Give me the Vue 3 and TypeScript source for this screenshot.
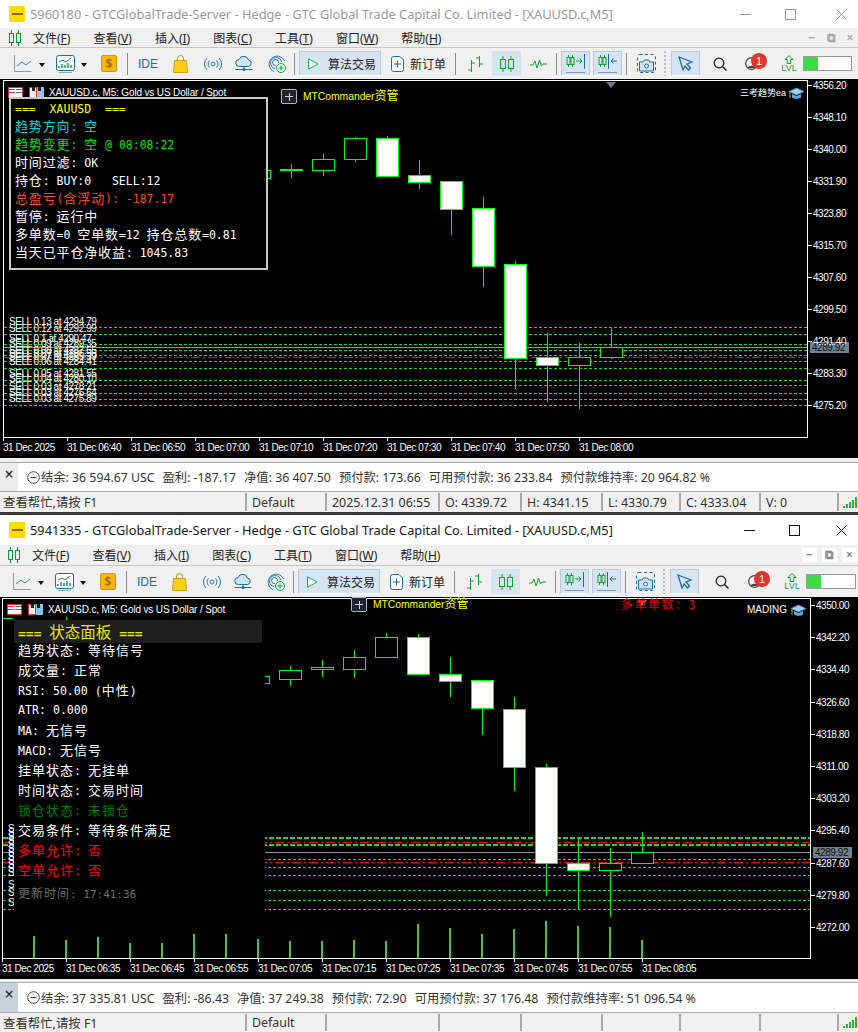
<template>
  <div class="page">
    <section v-for="w in windows" :key="w.id" class="win" :class="w.cls">
      <!-- title bar -->
      <header class="title">
        <span class="logo"><i></i></span>
        <span class="title-text">{{ w.id }} - GTCGlobalTrade-Server - Hedge - GTC Global Trade Capital Co. Limited - [XAUUSD.c,M5]</span>
        <span class="caption">
          <svg class="cap-min" width="11" height="11" viewBox="0 0 11 11"><path d="M0 5.5h11" /></svg>
          <svg class="cap-max" width="11" height="11" viewBox="0 0 11 11"><rect x=".5" y=".5" width="10" height="10" /></svg>
          <svg class="cap-close" width="11" height="11" viewBox="0 0 11 11"><path d="M.5.5l10 10M10.5.5l-10 10" /></svg>
        </span>
      </header>

      <!-- menu -->
      <nav class="menu">
        <svg class="menu-logo" width="12" height="16" viewBox="0 0 12 16">
          <path d="M2.5 0v16M9.5 0v16" stroke="#0a9a35" fill="none" />
          <rect x=".5" y="3.5" width="4" height="9" fill="#f0f0f0" stroke="#0a9a35" />
          <rect x="7.5" y="3.5" width="4" height="9" fill="#f0f0f0" stroke="#0a9a35" />
        </svg>
        <span v-for="m in menus" :key="m.k" class="menu-item">{{ m.t }}(<u>{{ m.k }}</u>)</span>
        <span class="mdi">
          <b>&#8722;</b><b>&#10697;</b><b>&#215;</b>
        </span>
      </nav>

      <!-- toolbar -->
      <div class="toolbar">
        <svg class="ti i-line" width="18" height="17" viewBox="0 0 18 17">
          <path d="M.5 0v16.500h17" stroke="#9a9a9a" fill="none" />
          <path d="M3 11l5-4 4 3 5-4" stroke="#3f7fb5" fill="none" />
        </svg>
        <span class="caret c1"></span>
        <svg class="ti i-chart" width="19" height="18" viewBox="0 0 19 18">
          <rect x=".5" y=".5" width="18" height="15" rx="2" fill="#fff" stroke="#1c6ca8" />
          <path d="M3 7l4-2 3 2 5-4" stroke="#1c6ca8" fill="none" />
          <path d="M3 13v-2M6 13v-4M9 13v-3M12 13v-5M15 13v-3" stroke="#1aa34a" stroke-width="1.500" />
          <path d="M3 17.500h13" stroke="#8aa" />
        </svg>
        <span class="caret c2"></span>
        <span class="ti i-dollar">$</span>
        <span class="sep s1"></span>
        <span class="ti i-ide">IDE</span>
        <svg class="ti i-bag" width="15" height="18" viewBox="0 0 15 18">
          <path d="M4.500 6V3.500a3 3 0 0 1 6 0V6" fill="none" stroke="#c98a10" />
          <path d="M1.500 5.500h12l1 12H.5z" fill="#ffcf10" stroke="#d8a010" />
        </svg>
        <svg class="ti i-signal" width="18" height="14" viewBox="0 0 18 14">
          <circle cx="9" cy="7" r="2" fill="none" stroke="#2a78b8" />
          <path d="M5.500 3.500a5 5 0 0 0 0 7M12.500 3.500a5 5 0 0 1 0 7M2.800 1a9 9 0 0 0 0 12M15.200 1a9 9 0 0 1 0 12" fill="none" stroke="#2a78b8" />
        </svg>
        <svg class="ti i-cloud" width="18" height="16" viewBox="0 0 18 16">
          <path d="M4.500 10.500a3.500 3.500 0 0 1-.5-7 5 5 0 0 1 9.500.5 3.300 3.300 0 0 1 0 6.500z" fill="#cfe4f5" stroke="#1c6ca8" />
          <path d="M9 10.500v3M.5 13.500h17" stroke="#1c6ca8" fill="none" />
          <circle cx="9" cy="13.500" r="1.500" fill="#1c6ca8" />
        </svg>
        <svg class="ti i-radar" width="18" height="18" viewBox="0 0 18 18">
          <path d="M6 16.500A8 8 0 1 1 16.500 6M7 13.500A5.500 5.500 0 1 1 13.500 7M8 10.500A3 3 0 1 1 10.500 8" fill="none" stroke="#2a78b8" />
          <circle cx="13" cy="13" r="4.500" fill="#e8f8ea" stroke="#1aa34a" />
          <path d="M13 10.500v5M10.500 13h5" stroke="#1aa34a" />
        </svg>
        <span class="sep s2"></span>
        <span class="tbtn algo">
          <svg width="11" height="12" viewBox="0 0 11 12"><path d="M.5.800v10.400L10 6z" fill="#f2fbf2" stroke="#1db34a" /></svg>
          <em>算法交易</em>
        </span>
        <span class="order">
          <svg width="13" height="16" viewBox="0 0 13 16">
            <path d="M.5 2.500a2 2 0 0 1 2-2H9l3.500 3.500V13.500a2 2 0 0 1-2 2h-8a2 2 0 0 1-2-2z" fill="#fff" stroke="#1c6ca8" />
            <path d="M6.500 4.500v7M3 8h7" stroke="#1c6ca8" />
          </svg>
          <em>新订单</em>
        </span>
        <span class="sep s3"></span>
        <svg class="ti i-bars" width="17" height="16" viewBox="0 0 17 16">
          <path d="M4.500 4v12M1 14h3.500M4.500 7H8M12.500 0v11M9 2h3.500M12.500 8H16" stroke="#12a32e" fill="none" />
        </svg>
        <span class="tbtn square candles">
          <svg width="14" height="16" viewBox="0 0 14 16">
            <path d="M3 0v16M11 0v16" stroke="#12a32e" />
            <rect x=".5" y="3.500" width="5" height="9" fill="#d6e4f2" stroke="#12a32e" />
            <rect x="8.500" y="3.500" width="5" height="9" fill="#d6e4f2" stroke="#12a32e" />
          </svg>
        </span>
        <svg class="ti i-zig" width="17" height="10" viewBox="0 0 17 10">
          <path d="M0 6h3l2-4 2 7 2.500-8 2 6 1.500-2H17" stroke="#12a32e" fill="none" />
        </svg>
        <span class="sep s4"></span>
        <span class="tbtn square shift1">
          <svg width="20" height="20" viewBox="0 0 20 20">
            <path d="M2.500 1v12M6.500 1v12" stroke="#12a32e" />
            <rect x="1" y="3.500" width="3" height="7" fill="#d6e4f2" stroke="#12a32e" />
            <rect x="5" y="3.500" width="3" height="7" fill="#d6e4f2" stroke="#12a32e" />
            <path d="M10 7h6M13.500 4.500L16 7l-2.500 2.500" stroke="#12a32e" fill="none" />
            <path d="M18.500 0v15" stroke="#1c6ca8" />
            <path d="M0 18.500h19" stroke="#8a9aaa" />
          </svg>
        </span>
        <span class="tbtn square shift2">
          <svg width="20" height="20" viewBox="0 0 20 20">
            <path d="M2.500 1v12M6.500 1v12" stroke="#12a32e" />
            <rect x="1" y="3.500" width="3" height="7" fill="#d6e4f2" stroke="#12a32e" />
            <rect x="5" y="3.500" width="3" height="7" fill="#d6e4f2" stroke="#12a32e" />
            <path d="M10.500 0v15" stroke="#1c6ca8" />
            <path d="M13 7h6M15.500 4.500L13 7l2.500 2.500" stroke="#1c6ca8" fill="none" />
            <path d="M0 18.500h19" stroke="#8a9aaa" />
          </svg>
        </span>
        <span class="sep s5"></span>
        <svg class="ti i-shot" width="19" height="19" viewBox="0 0 19 19">
          <rect x=".5" y=".5" width="18" height="18" rx="2" fill="none" stroke="#1c6ca8" stroke-dasharray="3 2.500" />
          <path d="M6 8l1.500-2h4L13 8h3.500v9H2.500V8z" fill="#cfe4f5" stroke="#1c6ca8" />
          <circle cx="9.500" cy="12" r="2" fill="#fff" stroke="#1c6ca8" />
        </svg>
        <span class="grip"></span>
        <span class="tbtn square cursor">
          <svg width="15" height="15" viewBox="0 0 15 15"><path d="M1 1l13 5-5 2 3.500 4-2 2-3.500-4L5 14z" fill="#d6e4f2" stroke="#1c6ca8" stroke-width="1.300" /></svg>
        </span>
        <svg class="ti i-search" width="14" height="14" viewBox="0 0 14 14"><circle cx="6" cy="6" r="4.800" fill="none" stroke="#222" stroke-width="1.300" /><path d="M9.500 9.500L13.500 13.500" stroke="#222" stroke-width="1.500" /></svg>
        <span class="ti i-user">
          <svg width="13" height="13" viewBox="0 0 13 13"><circle cx="6.500" cy="6.500" r="5.800" fill="none" stroke="#444" stroke-width="1.200" /><path d="M2.500 11c1-3 7-3 8 0" fill="#444" /></svg>
          <b class="badge">1</b>
        </span>
        <span class="ti i-lvl">
          <svg width="10" height="9" viewBox="0 0 10 9"><path d="M5 .5L9 4.500H6.800V8.500H3.200V4.500H1z" fill="#e2f6e4" stroke="#18a038" /></svg>
          <b>LVL</b>
        </span>
        <span class="ti meter"><i></i></span>
      </div>

      <!-- chart -->
      <main class="chart">
        <svg class="plot" width="858" :height="w.h" :viewBox="`0 ${w.top} 858 ${w.h}`">
          <g shape-rendering="crispEdges">
            <rect x="0" :y="w.top" width="858" :height="w.h" fill="#000" />
            <path :d="`M${w.left + .5} ${w.top + 1}V${w.bottom + .5}H${w.right + .5}V${w.top + 1.500}H${w.left}`" fill="none" stroke="#fff" />
            <!-- order levels -->
            <line v-for="l in w.levels" :key="l.y" :x1="w.left + 1" :x2="w.right" :y1="l.y + .5" :y2="l.y + .5" :stroke="l.c" :stroke-width="l.sw ?? 1" :stroke-dasharray="l.d" />
            <!-- candles -->
            <g v-for="c in w.candles" :key="c.x">
              <line :x1="c.x + .5" :x2="c.x + .5" :y1="c.hi" :y2="c.lo" stroke="#00ff00" />
              <rect :x="c.x - 10.5" :y="c.top + .5" width="22" :height="c.bot - c.top" :fill="c.up ? '#000' : '#fff'" stroke="#00ff00" />
            </g>
            <!-- volumes -->
            <rect v-for="v in w.vols" :key="v.x" :x="v.x - 1" :y="v.y" width="2" :height="w.bottom - v.y" fill="#32cd32" />
            <!-- ticks -->
            <path v-for="t in w.times" :key="t.x" :d="`M${t.x + .5} ${w.bottom}v4`" stroke="#fff" />
            <path v-for="p in w.prices" :key="p.t" :d="`M${w.right} ${p.y + .5}h5`" stroke="#fff" />
            <rect :x="w.right + 3" :y="w.cur - 5" width="39" height="11" fill="#708090" />
          </g>
          <path :d="`M${w.tri - 5} ${w.top + 3}h10l-5 6z`" fill="#6f7b8a" />

          <g class="lbl">
            <text v-for="s in w.sells" :key="s.y" :x="w.sellX" :y="s.y + 3" fill="#fff">{{ s.t }}</text>
            <text v-for="t in w.times" :key="t.t" :x="t.x" :y="w.bottom + 14" fill="#fff">{{ t.t }}</text>
            <text v-for="p in w.prices" :key="p.t" :x="w.right + 6" :y="p.y + 4" fill="#fff">{{ p.t }}</text>
            <text :x="w.right + 5" :y="w.cur + 4" fill="#111">4289.92</text>
            <text class="sym" :x="w.symX" :y="w.symY" fill="#fff">XAUUSD.c, M5:  Gold vs US Dollar / Spot</text>
          </g>
          <!-- chart state icons -->
          <g shape-rendering="crispEdges">
            <rect :x="w.symX - 40.5" :y="w.symY - 8.5" width="14" height="10" fill="#fff" stroke="#d33" />
            <path :d="`M${w.symX - 40} ${w.symY - 6.5}h6M${w.symX - 40} ${w.symY - 3.5}h6`" stroke="#d33" />
            <path :d="`M${w.symX - 33} ${w.symY - 6.5}h6M${w.symX - 33} ${w.symY - 3.5}h6`" stroke="#2a78d8" />
            <rect :x="w.symX - 19.5" :y="w.symY - 8.500" width="7" height="10" fill="#f6ecec" stroke="#d33" />
            <rect :x="w.symX - 12" :y="w.symY - 9" width="7" height="11" fill="#8fc4ea" />
            <rect :x="w.symX - 17" :y="w.symY - 9" width="3" height="4" fill="#222" />
            <rect :x="w.symX - 11" :y="w.symY - 9" width="3" height="4" fill="#222" />
          </g>
          <!-- trade button -->
          <g class="plus" shape-rendering="crispEdges">
            <rect :x="w.plusX + .5" :y="w.plusY + .5" width="15" height="14" rx="2" fill="#1d2430" stroke="#aeb4bc" />
            <path :d="`M${w.plusX + 4} ${w.plusY + 7.500}h8M${w.plusX + 8} ${w.plusY + 4}v8`" stroke="#d0d4d8" />
          </g>
          <text class="cmd" :x="w.plusX + 22" :y="w.plusY + 11" fill="#ffff00">MTCommander<tspan class="cmd-cjk">资管</tspan></text>
          <text v-if="w.count" class="count" x="621" y="609" fill="#e00000">多单单数：3</text>
          <text class="brand" :x="w.brandX" :y="w.brandY" fill="#fff">{{ w.brand }}</text>
          <!-- cap -->
          <g :transform="`translate(${w.capX} ${w.brandY - 9})`">
            <path d="M0 4.500L7.500 1 15 4.500 7.500 8z" fill="#9fd0f0" stroke="#3a8cc8" stroke-width=".8" />
            <path d="M3 7v3.500c2 1.800 7 1.800 9 0V7L7.500 9z" fill="#5fa8dc" />
            <path d="M1 5v6" stroke="#d0a040" />
          </g>
          <path v-if="w.cls === 'w2'" d="M3 618.500h10M66.500 617v2.500" stroke="#00ff00" shape-rendering="crispEdges" />
        </svg>

        <!-- info panel floating over the chart -->
        <div class="panel" :class="w.panelCls">
          <div v-for="(row, i) in w.panel" :key="i" class="row" :class="row.c">
            <span v-for="(r, j) in runs(row.t)" :key="j" :class="r.cjk ? 'cjk' : 'lat'">{{ r.t }}</span>
          </div>
        </div>
      </main>

      <!-- account line -->
      <div class="gutter"></div>
      <div class="terminal">
        <span class="close-x">&#215;</span>
        <svg class="minus" width="13" height="13" viewBox="0 0 13 13"><circle cx="6.500" cy="6.500" r="5.800" fill="none" stroke="#444" /><path d="M3.500 6.500h6" stroke="#444" /></svg>
        <span v-for="a in w.account" :key="a" class="acct">{{ a }}</span>
      </div>

      <!-- status bar -->
      <footer class="status">
        <span class="help">查看帮忙,请按 F1</span>
        <span>Default</span>
        <span>{{ w.stat[0] }}</span>
        <span>{{ w.stat[1] }}</span>
        <span>{{ w.stat[2] }}</span>
        <span>{{ w.stat[3] }}</span>
        <span>{{ w.stat[4] }}</span>
        <span>{{ w.stat[5] }}</span>
        <span class="conn">
          <svg width="15" height="11" viewBox="0 0 15 11" shape-rendering="crispEdges">
            <path d="M0 9h2v2H0zM3 7h2v4H3zM6 5h2v6H6zM9 3h2v8H9zM12 0h2v11h-2z" fill="#2cb52c" />
          </svg>
        </span>
      </footer>
    </section>
  </div>
</template>

<script setup lang="ts">
interface Candle { x: number; hi: number; lo: number; top: number; bot: number; up: boolean }
interface Level { y: number; c: string; d?: string; sw?: number }

const menus = [
  { t: '文件', k: 'F' },
  { t: '查看', k: 'V' },
  { t: '插入', k: 'I' },
  { t: '图表', k: 'C' },
  { t: '工具', k: 'T' },
  { t: '窗口', k: 'W' },
  { t: '帮助', k: 'H' },
]

// 把文字拆成中文段和西文段, 两段字号不同
const runs = (s: string) =>
  (s.match(/[\u3000-\u9fff\uff00-\uffef]+|[^\u3000-\u9fff\uff00-\uffef]+/g) ?? []).map((t) => ({
    t,
    cjk: /[\u3000-\u9fff\uff00-\uffef]/.test(t),
  }))

const candle = (x: number, hi: number, lo: number, top: number, bot: number, up: boolean): Candle => ({ x, hi, lo, top, bot, up })

const G = '#32cd32'
const dash = (y: number, sw = 1): Level => ({ y, c: G, d: sw > 1 ? '5 2' : '3 2', sw })
const red = (y: number, c = '#ff0000'): Level => ({ y, c, d: '9 3 2 3' })

const times = (start: number, labels: string[]) => labels.map((t, i) => ({ x: start + i * 64, t: '31 Dec ' + t }))

const win1 = {
  id: '5960180',
  cls: 'w1',
  top: 79,
  h: 379,
  left: 3,
  right: 807,
  bottom: 437,
  cur: 347,
  tri: 611,
  symX: 49,
  symY: 96,
  plusX: 281,
  plusY: 89,
  brand: '三考趋势ea',
  brandX: 740,
  brandY: 96,
  capX: 789,
  sellX: 9,
  count: false,
  panelCls: 'p1',
  candles: [
    candle(259, 170, 178, 170, 178, true),
    candle(291, 164, 178, 169, 170, true),
    candle(323, 154, 176, 159, 170, true),
    candle(355, 137, 162, 138, 159, true),
    candle(387, 136, 177, 138, 176, false),
    candle(419, 160, 189, 175, 182, false),
    candle(451, 181, 235, 181, 209, false),
    candle(483, 197, 287, 208, 266, false),
    candle(515, 261, 389, 264, 358, false),
    candle(547, 333, 402, 357, 365, false),
    candle(579, 343, 409, 357, 365, true),
    candle(611, 327, 359, 347, 357, true),
  ],
  vols: [] as { x: number; y: number }[],
  levels: [
    dash(327), dash(334), dash(344), dash(350), dash(355), dash(361), dash(368), dash(380), dash(385), dash(393), dash(399), dash(405),
    { y: 347, c: '#8a97a6' },
    red(357, '#d02020'),
  ] as Level[],
  sells: [
    { y: 322, t: 'SELL 0.13 at 4294.79' },
    { y: 329, t: 'SELL 0.12 at 4292.99' },
    { y: 339, t: 'SELL 0.1 at 4290.47' },
    { y: 344, t: 'SELL 0.09 at 4289.35' },
    { y: 351, t: 'SELL 0.08 at 4287.55' },
    { y: 354, t: 'SELL 0.07 at 4286.55' },
    { y: 357, t: 'SELL 0.07 at 4285.39' },
    { y: 362, t: 'SELL 0.06 at 4284.41' },
    { y: 374, t: 'SELL 0.05 at 4281.55' },
    { y: 379, t: 'SELL 0.04 at 4280.10' },
    { y: 387, t: 'SELL 0.03 at 4278.21' },
    { y: 393, t: 'SELL 0.03 at 4276.64' },
    { y: 399, t: 'SELL 0.03 at 4275.89' },
  ],
  times: [
    { x: 3, t: '31 Dec 2025' },
    ...times(67, ['06:40', '06:50', '07:00', '07:10', '07:20', '07:30', '07:40', '07:50', '08:00']),
  ],
  prices: ['4356.20', '4348.10', '4340.00', '4331.90', '4323.80', '4315.70', '4307.60', '4299.50', '4291.40', '4283.30', '4275.20'].map((t, i) => ({
    t,
    y: Math.round(85 + i * 32.02),
  })),
  panel: [
    { t: '===  XAUUSD  ===', c: 'yellow' },
    { t: '趋势方向: 空', c: 'cyan' },
    { t: '趋势变更: 空 @ 08:08:22', c: 'green' },
    { t: '时间过滤: OK' },
    { t: '持仓: BUY:0   SELL:12' },
    { t: '总盈亏(含浮动): -187.17', c: 'loss' },
    { t: '暂停: 运行中' },
    { t: '多单数=0 空单数=12 持仓总数=0.81' },
    { t: '当天已平仓净收益: 1045.83' },
  ],
  account: ['结余: 36 594.67 USC', '盈利: -187.17', '净值: 36 407.50', '预付款: 173.66', '可用预付款: 36 233.84', '预付款维持率: 20 964.82 %'],
  stat: ['2025.12.31 06:55', 'O: 4339.72', 'H: 4341.15', 'L: 4330.79', 'C: 4333.04', 'V: 0'],
}

const volTops = [936, 940, 937, 943, 943, 934, 934, 939, 941, 941, 940, 941, 924, 928, 934, 929, 921, 926, 927, 940]

const win2 = {
  id: '5941335',
  cls: 'w2',
  top: 597,
  h: 382,
  left: 2,
  right: 810,
  bottom: 958,
  cur: 852,
  tri: 642,
  symX: 48,
  symY: 613,
  plusX: 351,
  plusY: 597,
  brand: 'MADING',
  brandX: 747,
  brandY: 613,
  capX: 791,
  sellX: 8,
  count: true,
  panelCls: 'p2',
  candles: [
    candle(258, 676, 683, 676, 683, true),
    candle(290, 666, 686, 670, 679, true),
    candle(322, 660, 677, 667, 669, true),
    candle(354, 650, 678, 657, 669, true),
    candle(386, 633, 657, 637, 657, true),
    candle(418, 634, 674, 637, 674, false),
    candle(450, 657, 697, 674, 681, false),
    candle(482, 680, 735, 680, 708, false),
    candle(514, 697, 791, 709, 767, false),
    candle(546, 764, 896, 767, 863, false),
    candle(578, 837, 909, 863, 870, false),
    candle(610, 848, 917, 863, 870, true),
    candle(642, 832, 864, 852, 863, true),
  ],
  vols: volTops.map((y, i) => ({ x: 34 + i * 32, y })),
  levels: [
    dash(837, 2), dash(844, 2), dash(859), dash(867), dash(875), dash(890), dash(900), dash(909),
    red(842), red(862),
    { y: 852, c: '#8a97a6' },
  ] as Level[],
  sells: [829, 833, 837, 841, 845, 849, 853, 857, 861, 865, 869, 873, 885, 893, 903].map((y) => ({ y, t: 'SELL 0.03 at 4275.89' })),
  times: [
    { x: 2, t: '31 Dec 2025' },
    ...times(66, ['06:35', '06:45', '06:55', '07:05', '07:15', '07:25', '07:35', '07:45', '07:55', '08:05']),
  ],
  prices: ['4350.00', '4342.20', '4334.40', '4326.60', '4318.80', '4311.00', '4303.20', '4295.40', '4287.60', '4279.80', '4272.00'].map((t, i) => ({
    t,
    y: Math.round(605 + i * 32.2),
  })),
  panel: [
    { t: '=== 状态面板 ===', c: 'head' },
    { t: '趋势状态: 等待信号' },
    { t: '成交量: 正常' },
    { t: 'RSI: 50.00 (中性)' },
    { t: 'ATR: 0.000' },
    { t: 'MA: 无信号' },
    { t: 'MACD: 无信号' },
    { t: '挂单状态: 无挂单' },
    { t: '时间状态: 交易时间' },
    { t: '锁仓状态: 未锁仓', c: 'dim' },
    { t: '交易条件: 等待条件满足' },
    { t: '多单允许: 否', c: 'bad' },
    { t: '空单允许: 否', c: 'bad' },
    { t: '更新时间: 17:41:36', c: 'time' },
  ],
  account: ['结余: 37 335.81 USC', '盈利: -86.43', '净值: 37 249.38', '预付款: 72.90', '可用预付款: 37 176.48', '预付款维持率: 51 096.54 %'],
  stat: ['', '', '', '', '', ''],
}

const windows = [win1, win2]
</script>

<style>
html,
body {
  margin: 0;
  background: #3a3a3a;
  overflow: hidden;
}
</style>

<style scoped>
.page {
  width: 858px;
  height: 1032px;
  overflow: hidden;
  font-family: "Noto Sans", "Noto Sans CJK SC", sans-serif;
  color: #222;
}

.win {
  display: flex;
  flex-direction: column;
  background: #f0f0f0;
}

.w1 {
  height: 512px;
  margin-bottom: 3px;
}

.w2 {
  height: 517px;
}

/* title bar */
.title {
  display: flex;
  align-items: center;
  background: #fff;
  height: 28px;
  flex: none;
}

.w2 .title {
  height: 30px;
}

.logo {
  width: 16px;
  height: 16px;
  margin-left: 9px;
  background: #ffdc00;
  display: flex;
  align-items: center;
  justify-content: center;
}

.logo i {
  width: 11px;
  height: 2px;
  background: #7a6a20;
}

.title-text {
  margin-left: 5px;
  font-size: 12.8px;
  color: #1a1a1a;
  white-space: nowrap;
}

.w1 .title-text {
  color: #9a9a9a;
}

.caption {
  margin-left: auto;
  display: flex;
  gap: 34px;
  padding-right: 11px;
}

.caption svg {
  fill: none;
  stroke: #9a9a9a;
}

.w2 .caption svg {
  stroke: #111;
}

.cap-close {
  margin-left: 6px;
}

.w2 .cap-close {
  margin-left: 2px;
}

/* menu */
.menu {
  display: flex;
  align-items: center;
  gap: 23px;
  height: 20px;
  flex: none;
  padding-left: 9px;
  font-size: 12px;
  border-bottom: 1px solid #c6c6c6;
  box-sizing: border-box;
  position: relative;
}

.w2 .menu {
  height: 21px;
  padding-left: 8px;
}

.menu-logo {
  margin-right: -11px;
}

.menu-item {
  white-space: nowrap;
  font-size: 12px;
}

.mdi {
  margin-left: auto;
  display: flex;
  gap: 5px;
  padding-right: 1px;
}

.mdi b {
  width: 14px;
  font-size: 12px;
  line-height: 14px;
  color: #aaa;
  text-align: center;
}

.w2 .mdi b {
  background: #fff;
  color: #8a8a8a;
  width: 15px;
}

/* toolbar */
.toolbar {
  display: flex;
  align-items: center;
  height: 31px;
  flex: none;
}

.ti {
  flex: none;
}

.caret {
  flex: none;
  border-left: 3.5px solid transparent;
  border-right: 3.5px solid transparent;
  border-top: 4px solid #111;
  margin-top: 2px;
}

.sep {
  flex: none;
  width: 1px;
  height: 22px;
  background: #8f8f8f;
}

.i-line {
  margin-left: 14px;
}

.w2 .i-line {
  margin-left: 13px;
}

.c1 {
  margin-left: 7px;
}

.i-chart {
  margin-left: 11px;
}

.c2 {
  margin-left: 6px;
}

.i-dollar {
  margin-left: 14px;
  width: 14px;
  height: 15px;
  line-height: 15px;
  text-align: center;
  background: #f6b80c;
  border: 1px solid #d89410;
  border-radius: 2px;
  font-size: 12px;
  font-weight: 700;
  color: #a86f05;
}

.s1 {
  margin-left: 10px;
}

.i-ide {
  margin-left: 10px;
  font-family: "Liberation Sans", sans-serif;
  font-size: 12px;
  color: #1a6cae;
}

.i-bag {
  margin-left: 15px;
}

.i-signal {
  margin-left: 16px;
}

.i-cloud {
  margin-left: 13px;
}

.i-radar {
  margin-left: 15px;
}

.s2 {
  margin-left: 8px;
}

.tbtn {
  flex: none;
  display: flex;
  align-items: center;
  height: 25px;
  background: #d6e4f2;
  border: 1px solid #bccbdb;
  border-bottom-color: #fff;
  box-sizing: border-box;
}

.tbtn em,
.order em {
  font-style: normal;
  font-size: 12px;
  white-space: nowrap;
}

.algo {
  margin-left: 4px;
  width: 82px;
  padding-left: 8px;
  gap: 9px;
}

.order {
  flex: none;
  display: flex;
  align-items: center;
  margin-left: 10px;
  gap: 6px;
}

.s3 {
  margin-left: 9px;
}

.square {
  width: 29px;
  justify-content: center;
}

.i-bars {
  margin-left: 11px;
}

.candles {
  margin-left: 8px;
  border-color: #d6e4f2;
}

.i-zig {
  margin-left: 9px;
}

.s4 {
  margin-left: 9px;
}

.shift1 {
  margin-left: 4px;
}

.shift2 {
  margin-left: 3px;
}

.s5 {
  margin-left: 4px;
}

.i-shot {
  margin-left: 10px;
}

.grip {
  flex: none;
  margin-left: 8px;
  width: 2px;
  height: 25px;
  background: repeating-linear-gradient(#bbb 0 2px, transparent 2px 4px);
}

.cursor {
  margin-left: 5px;
}

.i-search {
  margin-left: 13px;
}

.w2 .i-search {
  margin-left: 16px;
}

.i-user {
  margin-left: 18px;
  position: relative;
  display: flex;
}

.w2 .i-user {
  margin-left: 19px;
}

.badge {
  position: absolute;
  left: 6px;
  top: -4px;
  width: 16px;
  height: 16px;
  border-radius: 50%;
  background: #e0352b;
  color: #fff;
  font-size: 11px;
  font-weight: 400;
  line-height: 16px;
  text-align: center;
  font-family: "Liberation Sans", sans-serif;
}

.i-lvl {
  margin-left: 24px;
  width: 14px;
  display: flex;
  flex-direction: column;
  align-items: center;
}

.i-lvl b {
  font-family: "Liberation Sans", sans-serif;
  font-size: 9px;
  line-height: 8px;
  font-weight: 400;
  color: #18a038;
}

.meter {
  margin-left: 7px;
  width: 47px;
  height: 13px;
  background: #fff;
  border: 1px solid #999;
  display: block;
}

.w2 .meter {
  width: 48px;
}

.meter i {
  display: block;
  width: 14px;
  height: 13px;
  background: #3ddc44;
}

/* chart */
.chart {
  position: relative;
  flex: none;
  height: 379px;
  background: #000;
}

.w2 .chart {
  height: 382px;
}

.plot {
  display: block;
}

.lbl text {
  font-family: "Liberation Sans", sans-serif;
  font-size: 10px;
  letter-spacing: -.45px;
}

.lbl .sym {
  font-size: 10px;
  letter-spacing: -.15px;
  white-space: pre;
}

.cmd {
  font-family: "Liberation Sans", "Noto Sans CJK SC", sans-serif;
  font-size: 10.3px;
}

.cmd-cjk {
  font-size: 12px;
}

.count {
  font-family: "Noto Sans CJK SC", sans-serif;
  font-size: 12px;
  letter-spacing: 1.5px;
}

.brand {
  font-family: "Liberation Sans", "Noto Sans CJK SC", sans-serif;
  font-size: 10px;
}

.w1 .brand {
  font-size: 9px;
}

/* info panel */
.panel {
  position: absolute;
  box-sizing: border-box;
  background: #000;
  color: #fff;
  white-space: pre;
}

.p1 {
  left: 9px;
  top: 18px;
  width: 259px;
  height: 173px;
  border: 2px solid #c8c8c8;
  padding: 2px 0 0 4px;
}

.p2 {
  left: 14px;
  top: 23px;
  width: 251px;
  height: 308px;
}

.row {
  display: flex;
  align-items: baseline;
  height: 18px;
  line-height: 18px;
}

.p1 .row:first-child {
  height: 16px;
  line-height: 16px;
}

.p2 .row {
  height: 20px;
  line-height: 20px;
  padding-left: 4px;
}

.cjk {
  font-family: "Noto Sans CJK SC", sans-serif;
  font-size: 13px;
  letter-spacing: .85px;
}

.lat {
  font-family: "DejaVu Sans Mono", monospace;
  font-size: 11.5px;
}

.p2 .cjk {
  letter-spacing: 1px;
}

.p2 .lat {
  font-size: 11.6px;
}

.yellow {
  color: #ffff00;
}

.cyan {
  color: #00d8d8;
}

.green {
  color: #00e000;
}

.loss {
  color: #ff4a2a;
}

.p2 .head {
  height: 23px;
  line-height: 23px;
  margin-bottom: -3px;
  background: #1e1e1e;
  color: #e6e600;
  width: 248px;
  box-sizing: border-box;
}

.p2 .head .cjk {
  font-size: 15.5px;
  letter-spacing: 0;
}

.p2 .head .lat {
  font-size: 13px;
  font-weight: 700;
}

.p2 .dim {
  color: #007a00;
}

.p2 .bad {
  color: #ff0000;
}

.p2 .time {
  color: #6e6e6e;
  height: 25px;
  line-height: 25px;
}

.p2 .time .cjk {
  font-size: 12px;
}

.p2 .time .lat {
  font-size: 11px;
}

/* account line */
.gutter {
  flex: none;
  height: 4px;
  border-bottom: 1px solid #aaa;
  background: #f0f0f0;
}

.w2 .gutter {
  height: 3px;
}

.terminal {
  flex: none;
  display: flex;
  align-items: center;
  height: 28px;
  background: #fff;
  font-size: 12.3px;
  color: #333;
  border-bottom: 1px solid #aaa;
  box-sizing: content-box;
}

.w2 .terminal {
  height: 29px;
}

.close-x {
  align-self: stretch;
  width: 18px;
  background: #ececec;
  font-size: 16px;
  line-height: 22px;
  text-align: center;
  color: #222;
  margin-right: 9px;
}

.w2 .close-x {
  background: #c5d2de;
}

.minus {
  flex: none;
  margin-right: 1px;
}

.acct {
  white-space: nowrap;
  margin-right: 8px;
}

/* status bar */
.status {
  flex: none;
  display: grid;
  grid-template-columns: 245px 80px 113px 82px 81px 78px 80px 78px 1fr;
  align-items: stretch;
  height: 20px;
  font-size: 12.4px;
  color: #333;
}

.w2 .status {
  height: 19px;
}

.status span {
  display: flex;
  align-items: center;
  padding-left: 5px;
  border-left: 2px solid #a8a8a8;
  white-space: nowrap;
  overflow: hidden;
  margin-top: 1px;
  margin-bottom: 1px;
}

.status .help {
  border-left: 0;
  padding-left: 3px;
}

.status .conn {
  padding-left: 4px;
}
</style>
